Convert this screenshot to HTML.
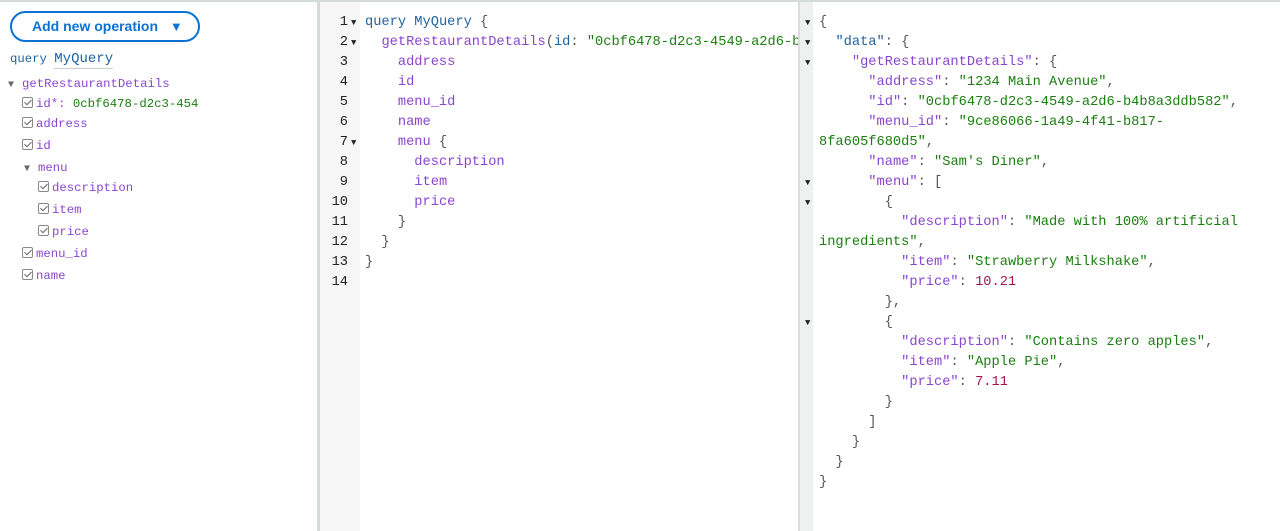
<!DOCTYPE html>
<html><head><meta charset="utf-8"><style>
*{margin:0;padding:0;box-sizing:border-box}
body{width:1280px;height:531px;overflow:hidden;background:#fff;position:relative;font-family:"Liberation Mono",monospace}
.top{position:absolute;left:0;top:0;width:1280px;height:2px;background:#d5dbdb}
#left{position:absolute;left:0;top:2px;width:317px;height:529px;background:#fff}
.vsep{position:absolute;top:0;height:531px;background:#d5dbdb}
.btn{position:absolute;left:10px;top:9px;width:190px;height:31px;border:2px solid #0972d3;border-radius:16px;color:#0972d3;font:bold 14px "Liberation Sans",sans-serif;line-height:27px;padding-left:20px}
.btn span{font-size:13px;margin-left:8px}
.sb{position:absolute;font-size:12.3px;color:#8a45d0;white-space:pre;line-height:14px}
.cb{display:inline-block;width:11px;height:11px;border:1px solid #888;border-radius:2px;vertical-align:-1px;margin-right:3px;position:relative;background:#fff}
.cb:after{content:"";position:absolute;left:3px;top:0px;width:3px;height:6px;border:solid #666;border-width:0 1px 1px 0;transform:rotate(45deg)}
.tri{font-size:10px;color:#666;display:inline-block;width:14px}
.gut{position:absolute;top:2px;height:529px;background:#f6f6f6}
.ln{position:absolute;left:320px;width:28px;text-align:right;font-size:13.7px;color:#222;line-height:20px}
.fold{position:absolute;font-size:9px;color:#222}
.code{position:absolute;font-size:13.7px;line-height:20px;white-space:pre;color:#555}
.k{color:#1f61a0}.p{color:#8a45d0}.s{color:#1a7f0f}.n{color:#a3154a}
</style></head><body>
<div class="top"></div>
<div id="left">
<div class="btn">Add new operation <span>▼</span></div>
</div>
<div class="sb" style="left:10px;top:52px;color:#1f61a0">query <span style="font-size:14px;border-bottom:1px solid #ccc;padding-bottom:1px">MyQuery</span></div>
<div class="sb" style="left:8px;top:77px"><span class="tri">▼</span>getRestaurantDetails</div>
<div class="sb" style="left:22px;top:97px"><span class="cb"></span>id*: <span style="color:#1a7f0f">0cbf6478-d2c3-454</span></div>
<div class="sb" style="left:22px;top:117px"><span class="cb"></span>address</div>
<div class="sb" style="left:22px;top:139px"><span class="cb"></span>id</div>
<div class="sb" style="left:24px;top:161px"><span class="tri">▼</span>menu</div>
<div class="sb" style="left:38px;top:181px"><span class="cb"></span>description</div>
<div class="sb" style="left:38px;top:203px"><span class="cb"></span>item</div>
<div class="sb" style="left:38px;top:225px"><span class="cb"></span>price</div>
<div class="sb" style="left:22px;top:247px"><span class="cb"></span>menu_id</div>
<div class="sb" style="left:22px;top:269px"><span class="cb"></span>name</div>
<div class="vsep" style="left:317px;width:3px"></div>
<div class="gut" style="left:320px;width:40px"></div>
<div class="ln" style="top:13px">1<br>2<br>3<br>4<br>5<br>6<br>7<br>8<br>9<br>10<br>11<br>12<br>13<br>14</div>
<div class="fold" style="left:351px;top:18px">▼</div>
<div class="fold" style="left:351px;top:38px">▼</div>
<div class="fold" style="left:351px;top:138px">▼</div>
<div class="code" style="left:365px;top:13px;width:433px;overflow:hidden"><span class="k">query</span> <span class="k">MyQuery</span> {
  <span class="p">getRestaurantDetails</span>(<span class="k">id</span>: <span class="s">"0cbf6478-d2c3-4549-a2d6-b4b8a3ddb582"</span>) {
    <span class="p">address</span>
    <span class="p">id</span>
    <span class="p">menu_id</span>
    <span class="p">name</span>
    <span class="p">menu</span> {
      <span class="p">description</span>
      <span class="p">item</span>
      <span class="p">price</span>
    }
  }
}
</div>
<div class="vsep" style="left:798px;width:2px;background:#dcdcdc"></div>
<div class="gut" style="left:800px;width:13px;background:#eff0f0"></div>
<div class="fold" style="left:805px;top:18px">▼</div>
<div class="fold" style="left:805px;top:38px">▼</div>
<div class="fold" style="left:805px;top:58px">▼</div>
<div class="fold" style="left:805px;top:178px">▼</div>
<div class="fold" style="left:805px;top:198px">▼</div>
<div class="fold" style="left:805px;top:318px">▼</div>
<div class="code" style="left:819px;top:13px">{
  <span class="k">"data"</span>: {
    <span class="p">"getRestaurantDetails"</span>: {
      <span class="p">"address"</span>: <span class="s">"1234 Main Avenue"</span>,
      <span class="p">"id"</span>: <span class="s">"0cbf6478-d2c3-4549-a2d6-b4b8a3ddb582"</span>,
      <span class="p">"menu_id"</span>: <span class="s">"9ce86066-1a49-4f41-b817-</span>
<span class="s">8fa605f680d5"</span>,
      <span class="p">"name"</span>: <span class="s">"Sam's Diner"</span>,
      <span class="p">"menu"</span>: [
        {
          <span class="p">"description"</span>: <span class="s">"Made with 100% artificial</span>
<span class="s">ingredients"</span>,
          <span class="p">"item"</span>: <span class="s">"Strawberry Milkshake"</span>,
          <span class="p">"price"</span>: <span class="n">10.21</span>
        },
        {
          <span class="p">"description"</span>: <span class="s">"Contains zero apples"</span>,
          <span class="p">"item"</span>: <span class="s">"Apple Pie"</span>,
          <span class="p">"price"</span>: <span class="n">7.11</span>
        }
      ]
    }
  }
}</div>
</body></html>
